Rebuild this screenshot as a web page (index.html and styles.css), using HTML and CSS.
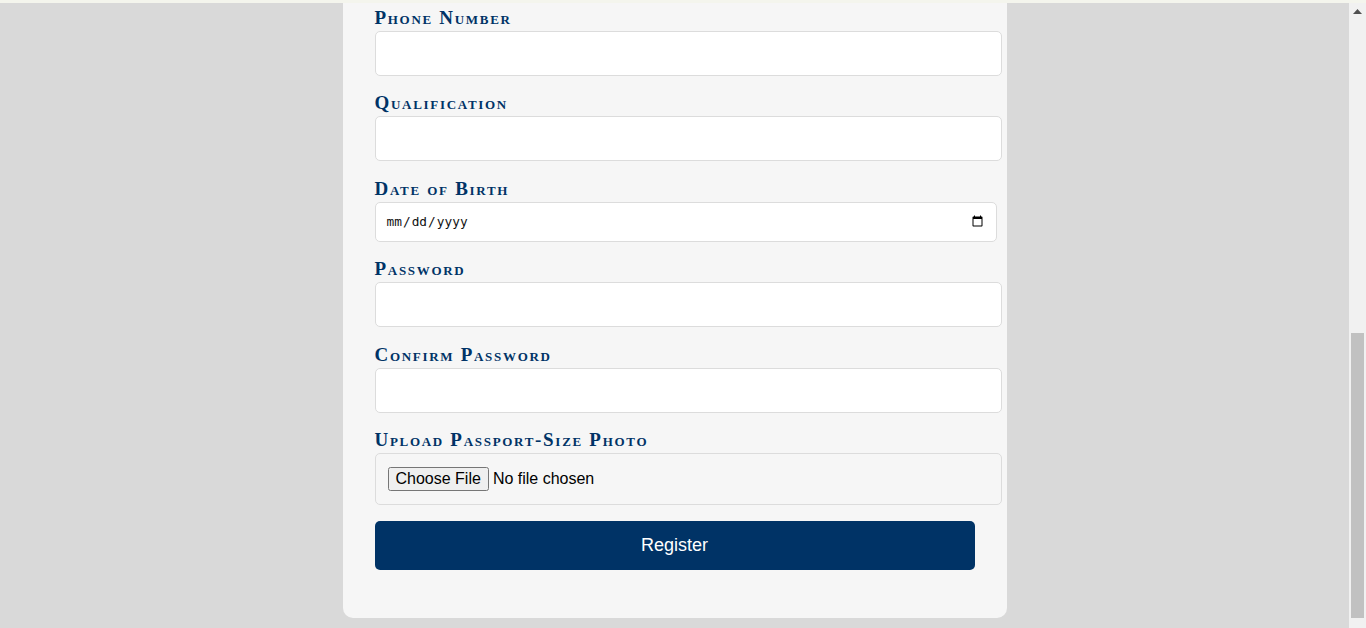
FILE: index.html
```html
<!DOCTYPE html>
<html lang="en">
<head>
<meta charset="utf-8">
<title>Student Registration</title>
<link rel="stylesheet" href="styles.css">
</head>
<body>
  <div class="top-strip"></div>
  <div class="viewport">
    <main class="page">
      <div class="card">
        <h2 class="card-title">Student Registration</h2>
        <form class="form">
          <div class="group">
            <label class="label" for="fullname">Full Name</label>
            <input class="input" type="text" id="fullname">
          </div>
          <div class="group">
            <label class="label" for="email">Email Address</label>
            <input class="input" type="email" id="email">
          </div>
          <div class="group">
            <label class="label" for="address">Address</label>
            <input class="input" type="text" id="address">
          </div>
          <div class="group">
            <label class="label" for="city">City</label>
            <input class="input" type="text" id="city">
          </div>
          <div class="group">
            <label class="label" for="gender">Gender</label>
            <input class="input" type="text" id="gender">
          </div>
          <div class="group">
            <label class="label" for="phone">Phone Number</label>
            <input class="input" type="tel" id="phone">
          </div>
          <div class="group">
            <label class="label" for="qualification">Qualification</label>
            <input class="input" type="text" id="qualification">
          </div>
          <div class="group">
            <label class="label" for="dob">Date of Birth</label>
            <input class="input-date" type="date" id="dob">
          </div>
          <div class="group">
            <label class="label" for="password">Password</label>
            <input class="input" type="password" id="password">
          </div>
          <div class="group">
            <label class="label" for="confirm">Confirm Password</label>
            <input class="input" type="password" id="confirm">
          </div>
          <div class="group group-last">
            <label class="label" for="photo">Upload Passport-Size Photo</label>
            <div class="file-box">
              <input class="input-file" type="file" id="photo">
            </div>
          </div>
          <button class="submit" type="button">Register</button>
        </form>
      </div>
    </main>
    <div class="scrollbar">
      <div class="scroll-arrow">
        <svg width="9" height="5" viewBox="0 0 9 5"><path d="M0 5 L4.5 0 L9 5 Z" fill="#505050"/></svg>
      </div>
      <div class="scroll-space"></div>
      <div class="scroll-thumb"></div>
    </div>
  </div>
</body>
</html>
```

FILE: styles.css
```css
* {
  box-sizing: content-box;
}

html, body {
  margin: 0;
  padding: 0;
  height: 100%;
}

body {
  display: flex;
  flex-direction: column;
  background: #d9d9d9;
  font-family: "Liberation Sans", Arial, sans-serif;
  overflow: hidden;
}

.top-strip {
  height: 3px;
  flex-shrink: 0;
  background: #f4f5ed;
}

.viewport {
  flex: 1;
  display: flex;
  min-height: 0;
}

.page {
  flex: 1;
  display: flex;
  flex-direction: column;
  justify-content: flex-end;
  align-items: center;
  overflow: hidden;
  padding-bottom: 10px;
}

.card {
  flex-shrink: 0;
  width: 600px;
  padding: 32px 32px 48px;
  background: #f6f6f6;
  border-radius: 10px;
}

.card-title {
  margin: 0 0 24px;
  text-align: center;
  color: #003366;
  font-family: "Liberation Serif", serif;
  font-variant: small-caps;
  font-size: 30px;
}

.form {
  display: flex;
  flex-direction: column;
}

.group {
  margin-bottom: 15.4px;
}

.group-last {
  margin-bottom: 16px;
}

.label {
  display: block;
  margin-bottom: 5px;
  height: 20px;
  line-height: 24px;
  color: #003366;
  font-family: "Liberation Serif", "Times New Roman", serif;
  font-weight: bold;
  font-variant: small-caps;
  font-size: 19px;
  letter-spacing: 1.7px;
}

.input {
  display: block;
  width: 100%;
  padding: 12px 13px 12px 12px;
  border: 1px solid #dcdcdc;
  border-radius: 5px;
  background: #fff;
  font-family: "Liberation Sans", Arial, sans-serif;
  font-size: 16px;
  line-height: 19px;
  height: 19px;
  outline: none;
}

.input-date {
  display: block;
  width: 100%;
  padding: 10px;
  border: 1px solid #dcdcdc;
  border-radius: 5px;
  background: #fff;
  font-family: "DejaVu Sans Mono", monospace;
  font-size: 12.8px;
  line-height: 18px;
  height: 18px;
  color: #111;
}

.file-box {
  width: 100%;
  padding: 12px 13px 12px 12px;
  border: 1px solid #dcdcdc;
  border-radius: 5px;
  background: #f6f6f6;
  height: 26px;
  display: flex;
  align-items: center;
}

.input-file {
  font-family: "Liberation Sans", Arial, sans-serif;
  font-size: 16px;
  color: #000;
}

.submit {
  box-sizing: border-box;
  width: 600px;
  height: 49px;
  padding: 0;
  border: none;
  border-radius: 5px;
  background: #003366;
  color: #fff;
  font-family: "Liberation Sans", Arial, sans-serif;
  font-size: 18px;
  cursor: pointer;
}

.scrollbar {
  width: 17px;
  flex-shrink: 0;
  display: flex;
  flex-direction: column;
  align-items: center;
  background: #f1f1f1;
}

.scroll-arrow {
  height: 17px;
  width: 17px;
  display: flex;
  align-items: center;
  justify-content: center;
}

.scroll-space {
  flex: 1;
}

.scroll-thumb {
  width: 13px;
  height: 285px;
  margin-bottom: 10px;
  background: #c1c1c1;
}
```
